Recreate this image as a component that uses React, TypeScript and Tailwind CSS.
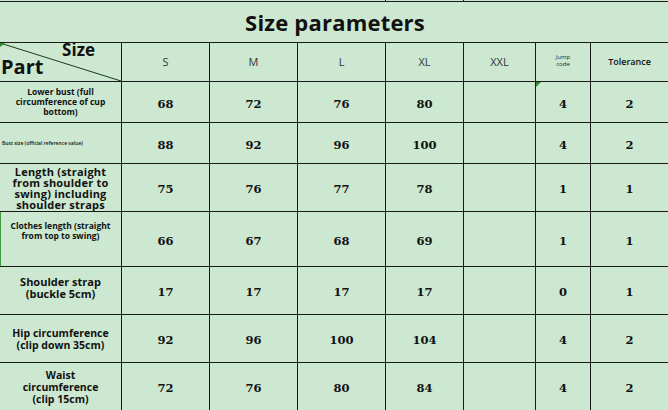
import React from "react";

const cols = "grid-cols-[122px_88px_88px_88px_78px_72px_55px_77px]";

type Row = {
  label: React.ReactNode;
  h: string;
  vals: string[];
  jump: string;
  tol: string;
  labelCls?: string;
};

const rows: Row[] = [
  {
    label: "Lower bust (full circumference of cup bottom)",
    h: "h-[41px]",
    vals: ["68", "72", "76", "80"],
    jump: "4",
    tol: "2",
    labelCls: "text-[8.5px] leading-[10px] px-3",
  },
  {
    label: "Bust size (official reference value)",
    h: "h-[41px]",
    vals: ["88", "92", "96", "100"],
    jump: "4",
    tol: "2",
    labelCls: "text-[5px] leading-[7px] justify-start px-[2px] font-semibold",
  },
  {
    label: "Length (straight from shoulder to swing) including shoulder straps",
    h: "h-[48px]",
    vals: ["75", "76", "77", "78"],
    jump: "1",
    tol: "1",
    labelCls: "text-[11px] leading-[11px] px-2 tracking-[0.2px]",
  },
  {
    label: "Clothes length (straight from top to swing)",
    h: "h-[55px]",
    vals: ["66", "67", "68", "69"],
    jump: "1",
    tol: "1",
    labelCls: "text-[8.5px] leading-[9.5px] items-start pt-[9px] px-1",
  },
  {
    label: "Shoulder strap (buckle 5cm)",
    h: "h-[48px]",
    vals: ["17", "17", "17", "17"],
    jump: "0",
    tol: "1",
    labelCls: "text-[11px] leading-[12px] items-start pt-[9px] px-2",
  },
  {
    label: "Hip circumference (clip down 35cm)",
    h: "h-[48px]",
    vals: ["92", "96", "100", "104"],
    jump: "4",
    tol: "2",
    labelCls: "text-[10.5px] leading-[12px] px-2",
  },
  {
    label: "Waist circumference (clip 15cm)",
    h: "h-[48px]",
    vals: ["72", "76", "80", "84"],
    jump: "4",
    tol: "2",
    labelCls: "text-[10.5px] leading-[12px] px-4",
  },
];

const num = "font-['DejaVu_Serif',serif] font-bold text-[11.5px] text-[#111]";

export default function App() {
  return (
    <div className="w-[668px] h-[410px] overflow-hidden bg-[#cde8d0] font-['Open_Sans',sans-serif] text-[#111]">
      {/* top stub row */}
      <div className={`grid ${cols} h-[1px]`}>
        <div />
        <div />
        <div />
        <div className="border-r border-[#1a1a1a]" />
        <div className="border-r border-[#1a1a1a]" />
        <div />
        <div />
        <div />
      </div>
      <div className="border-t border-[#1a1a1a]" />
      {/* title */}
      <div className="h-[41px] border-b border-[#1a1a1a] flex items-center justify-center">
        <span className="text-[22px] font-bold tracking-[0.2px] text-[#111] pl-[2px] pt-[1px]">Size parameters</span>
      </div>
      {/* header */}
      <div className={`grid ${cols} h-[39px] border-b border-[#1a1a1a]`}>
        <div className="relative border-r border-[#1a1a1a]">
          <svg className="absolute inset-0" width="121" height="38" viewBox="0 0 121 38">
            <line x1="0" y1="0" x2="121" y2="38" stroke="#1a3a20" strokeWidth="1" />
            <polygon points="0,0 5,0 0,4" fill="#2f8a2f" />
          </svg>
          <span className="absolute right-[26px] top-[-4px] text-[17px] font-bold leading-[22px]">Size</span>
          <span className="absolute left-[1px] top-[11px] text-[20px] font-bold leading-[26px]">Part</span>
        </div>
        {["S", "M", "L", "XL", "XXL"].map((s) => (
          <div
            key={s}
            className="border-r border-[#1a1a1a] flex items-center justify-center text-[11px] text-[#333]"
          >
            {s}
          </div>
        ))}
        <div className="border-r border-[#1a1a1a] flex flex-col items-center justify-center text-[6px] leading-[7px] text-[#222] pb-[2px]">
          <span>Jump</span>
          <span>code</span>
        </div>
        <div className="flex items-center justify-center text-[9px] font-semibold text-[#111]">Tolerance</div>
      </div>
      {rows.map((r, i) => (
        <div key={i} className={`grid ${cols} ${r.h} border-b border-[#1a1a1a]`}>
          <div
            className={`relative border-r border-[#1a1a1a] flex items-center justify-center text-center font-bold text-[#111] ${r.labelCls ?? ""}`}
          >
            {i === 3 && <div className="absolute left-0 top-0 bottom-0 w-[1px] bg-[#3f9a3f]" />}
            <span>{r.label}</span>
          </div>
          {r.vals.map((v, j) => (
            <div key={j} className={`border-r border-[#1a1a1a] flex items-center justify-center pt-[5px] ${num}`}>
              {v}
            </div>
          ))}
          <div className="border-r border-[#1a1a1a]" />
          <div className={`relative border-r border-[#1a1a1a] flex items-center justify-center pt-[5px] ${num} text-[10.5px]`}>
            {i === 0 && (
              <svg className="absolute left-0 top-0" width="5" height="5" viewBox="0 0 5 5">
                <polygon points="0,0 5,0 0,5" fill="#2f8a2f" />
              </svg>
            )}
            {r.jump}
          </div>
          <div className={`flex items-center justify-center pt-[5px] ${num} text-[10.5px]`}>{r.tol}</div>
        </div>
      ))}
    </div>
  );
}
